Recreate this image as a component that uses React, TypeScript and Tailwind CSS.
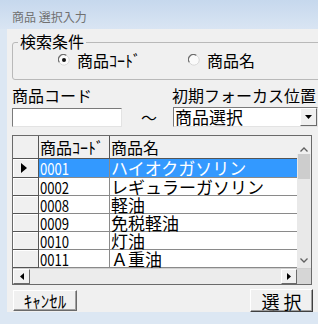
const rows = [
  { code: "0001", name: "ハイオクガソリン" },
  { code: "0002", name: "レギュラーガソリン" },
  { code: "0008", name: "軽油" },
  { code: "0009", name: "免税軽油" },
  { code: "0010", name: "灯油" },
  { code: "0011", name: "Ａ重油" },
];

const Radio = ({ checked }: { checked?: boolean }) => (
  <svg width="12" height="12" viewBox="0 0 12 12" className="shrink-0">
    <circle cx="6" cy="6" r="5.5" fill="#fafafa" />
    <path d="M1.5 8.5 A5 5 0 0 1 8.5 1.5" fill="none" stroke="#6d6d6d" strokeWidth="1.2" />
    <path d="M8.5 1.5 A5 5 0 0 1 8.5 10.5 A5 5 0 0 1 1.5 8.5" fill="none" stroke="#d6d6d6" strokeWidth="1" />
    {checked && <circle cx="6" cy="6" r="2" fill="#111" />}
  </svg>
);

export default function App() {
  return (
    <div className="w-[318px] h-[324px] overflow-hidden bg-[#dce7f3] font-['Noto_Sans_CJK_JP',sans-serif] text-black">
      {/* Title bar */}
      <div className="h-[29px] bg-gradient-to-b from-[#c6d8ed] to-[#d9e5f3] pl-[12px] pt-[9px] text-[12px] leading-[15px] text-[#707070]">
        商品 選択入力
      </div>

      <div className="ml-[7px] h-[283px] w-[311px] bg-[#f0f0f0] pl-[5px] flex flex-col">
        {/* 検索条件 */}
        <div className="relative mt-[13px] h-[38px] w-[310px] shrink-0 rounded-[3px] border border-[#b9b9b9]">
          <span className="absolute -top-[11px] left-[5px] bg-[#f0f0f0] px-[2px] text-[16px] leading-[18px]">検索条件</span>
          <div className="flex items-center pl-[45px] pt-[8px] text-[16px] leading-[18px]">
            <Radio checked />
            <span className="ml-[7px]">商品ｺｰﾄﾞ</span>
            <span className="ml-[47px]"><Radio /></span>
            <span className="ml-[7px]">商品名</span>
          </div>
        </div>

        {/* labels */}
        <div className="mt-[6px] flex text-[16px] leading-[18px] whitespace-nowrap">
          <div className="w-[160px]">商品コード</div>
          <div>初期フォーカス位置</div>
        </div>

        {/* inputs */}
        <div className="mt-[3px] flex items-center">
          <div className="flex w-[161px] items-center">
            <div className="h-[19px] w-[110px] border border-t-[#7a7a7a] border-l-[#7a7a7a] border-r-[#e3e3e3] border-b-[#e3e3e3] bg-white" />
            <span className="ml-[19px] text-[16px] leading-[18px]">～</span>
          </div>
          <div className="flex h-[20px] w-[145px] items-center border border-t-[#7a7a7a] border-l-[#7a7a7a] border-r-[#e3e3e3] border-b-[#e3e3e3] bg-white">
            <span className="flex-1 pl-[1px] text-[17px] leading-[18px]">商品選択</span>
            <div className="flex h-full w-[17px] items-center justify-center border border-t-white border-l-white border-r-[#6a6a6a] border-b-[#6a6a6a] bg-[#f0f0f0]">
              <svg width="7" height="4" viewBox="0 0 7 4"><path d="M0 0h7L3.5 4z" fill="#000" /></svg>
            </div>
          </div>
        </div>

        {/* Grid */}
        <div className="mt-[8px] flex h-[150px] w-[300px] shrink-0 flex-col border border-[#6a6a6a] bg-white">
          <div className="flex h-[132px]">
            <div className="w-[284px] overflow-hidden">
              <div className="flex h-[23px] bg-[#f0f0f0] text-[16px] leading-[18px]">
                <div className="w-[26px] border-r border-b border-[#555]" />
                <div className="w-[71px] border-r border-b border-[#555] pl-[1px] pt-[2px]">商品ｺｰﾄﾞ</div>
                <div className="flex-1 border-b border-[#555] pl-[1px] pt-[2px]">商品名</div>
              </div>
              {rows.map((r, i) => (
                <div key={r.code} className={`flex ${i === 0 ? "h-[19px]" : "h-[18px]"} text-[17px] leading-[17px]`}>
                  <div className="flex w-[26px] items-center justify-center border-r border-b border-[#555] bg-[#f0f0f0] shadow-[inset_1px_1px_0_#fff]">
                    {i === 0 && (
                      <svg width="6" height="10" viewBox="0 0 6 10" className="ml-[-4px]"><path d="M0 0l6 5-6 5z" fill="#000" /></svg>
                    )}
                  </div>
                  <div className={`w-[71px] border-r border-b border-[#8a8a8a] pl-[1px] ${i === 0 ? "bg-[#3399ff] text-white" : ""}`}>
                    <span className="inline-block origin-left scale-x-[0.82] text-[16px] leading-[17px]">{r.code}</span>
                  </div>
                  <div className={`flex-1 whitespace-nowrap border-b border-[#8a8a8a] pl-[1px] ${i === 0 ? "bg-[#3399ff] text-white" : ""}`}>
                    {r.name}
                  </div>
                </div>
              ))}
            </div>
            {/* vertical scrollbar */}
            <div className="flex w-[14px] flex-col bg-[#e9e9e9]">
              <div className="flex h-[18px] items-end justify-center bg-[#f0f0f0] pb-[2px]">
                <svg width="8" height="5" viewBox="0 0 8 5"><path d="M0.5 4.5L4 1l3.5 3.5" fill="none" stroke="#606060" strokeWidth="1.3" /></svg>
              </div>
              <div className="mx-[1px] h-[25px] bg-[#cdcdcd]" />
              <div className="flex-1" />
              <div className="flex h-[16px] items-center justify-center">
                <svg width="8" height="5" viewBox="0 0 8 5"><path d="M0.5 0.5L4 4l3.5-3.5" fill="none" stroke="#606060" strokeWidth="1.3" /></svg>
              </div>
            </div>
          </div>
          {/* horizontal scrollbar */}
          <div className="flex h-[16px] border-t border-[#d0d0d0]">
            <div className="flex w-[284px] bg-[#ececec]">
              <div className="flex w-[17px] items-center justify-center border border-t-white border-l-white border-r-[#6a6a6a] border-b-[#6a6a6a] bg-[#f0f0f0]">
                <svg width="4" height="7" viewBox="0 0 4 7"><path d="M4 0v7L0 3.5z" fill="#000" /></svg>
              </div>
              <div className="flex-1" />
              <div className="flex w-[16px] items-center justify-center border border-t-white border-l-white border-r-[#6a6a6a] border-b-[#6a6a6a] bg-[#f0f0f0]">
                <svg width="4" height="7" viewBox="0 0 4 7"><path d="M0 0v7l4-3.5z" fill="#000" /></svg>
              </div>
            </div>
            <div className="flex-1 bg-[#d6d6d6]" />
          </div>
        </div>

        {/* buttons */}
        <div className="mt-[5px] flex w-[301px] items-start justify-between">
          <button className="ml-[1px] h-[21px] w-[64px] border border-t-white border-l-white border-r-[#6a6a6a] border-b-[#6a6a6a] bg-[#f0f0f0] text-[17px] leading-[18px] shadow-[inset_-1px_-1px_0_#a0a0a0]">
            ｷｬﾝｾﾙ
          </button>
          <button className="-mt-[1px] h-[23px] w-[63px] border border-t-white border-l-white border-r-[#404040] border-b-[#404040] bg-[#f0f0f0] text-[18px] leading-[20px] shadow-[inset_-1px_-1px_0_#a0a0a0]">
            選 択
          </button>
        </div>
      </div>
    </div>
  );
}
